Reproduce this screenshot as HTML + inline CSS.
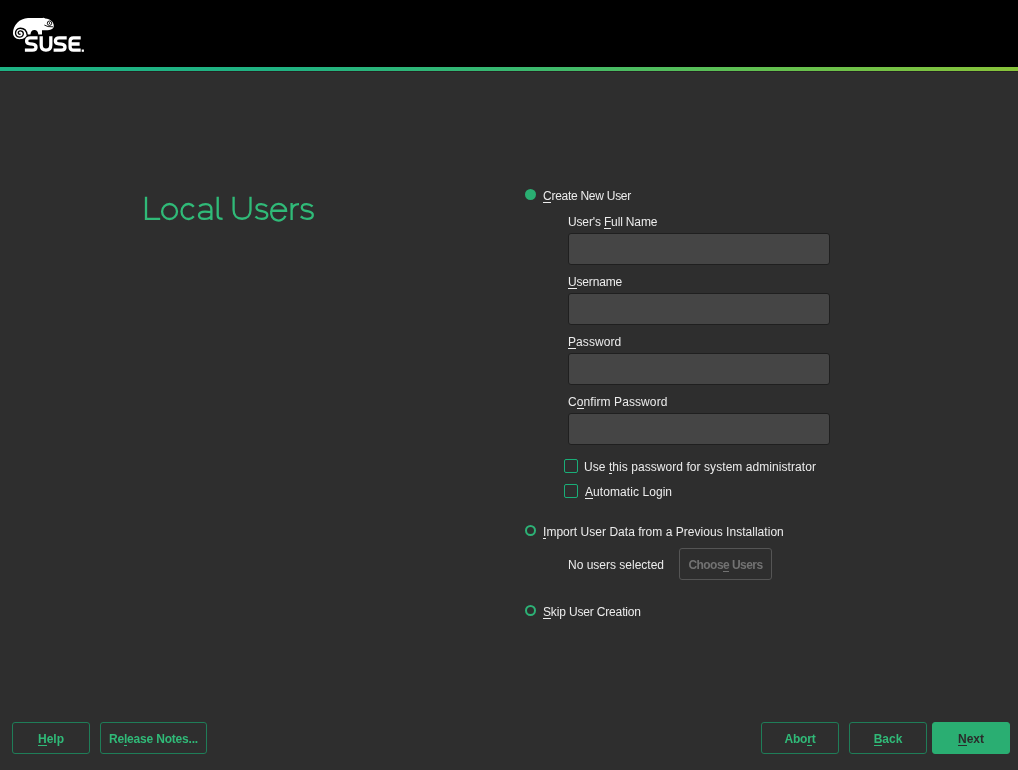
<!DOCTYPE html>
<html><head><meta charset="utf-8">
<style>
html,body{margin:0;padding:0;}
body{width:1018px;height:770px;background:#2e2e2e;position:relative;overflow:hidden;font-family:"Liberation Sans",sans-serif;}
.hdr{position:absolute;left:0;top:0;width:1018px;height:67px;background:#000;}
.line{position:absolute;left:0;top:67px;width:1018px;height:4px;background:linear-gradient(90deg,#1eb284 0%,#20b282 28%,#38b870 50%,#62c050 75%,#88c33a 100%);}
.line2{position:absolute;left:0;top:71px;width:1018px;height:1px;background:#262323;}
.t{position:absolute;will-change:transform;white-space:nowrap;color:#ececec;font-size:12px;line-height:14px;}
.k{position:relative;}
.k::after{content:"";position:absolute;left:0;right:0;top:13px;height:1px;background:currentColor;}
.btn .k::after{top:13px;}
.inp{position:absolute;left:568px;width:260px;height:30px;background:#454545;border:1px solid #1f1f1f;border-radius:3px;}
.radio{position:absolute;left:525px;width:11px;height:11px;border-radius:50%;box-sizing:border-box;}
.chk{position:absolute;left:564px;width:14px;height:14px;box-sizing:border-box;border:1.5px solid #1aae78;border-radius:2px;}
.btn{position:absolute;will-change:transform;height:32px;box-sizing:border-box;border:1px solid #1f7d58;border-radius:3px;color:#30ba78;font-weight:bold;font-size:12px;text-align:center;line-height:30px;padding-top:1px;white-space:nowrap;}
</style></head><body>
<div class="hdr"></div>
<div class="line"></div>
<div class="line2"></div>
<svg style="position:absolute;left:0;top:0" width="100" height="60" viewBox="0 0 100 60">
<path fill="#fff" d="M13,33 C13,25 19.5,18.3 28,17.9 L42.5,17.9 Q44,17.4 45.2,18.4 C50.5,19 53.6,22 53.7,25 C54,27.3 53.3,28.6 51,29.5 C48,30.4 44.5,30.4 42,30.3 L42,34.5 L38.3,34.5 C38.3,32 36.8,30.1 34.4,30.1 C32,30.1 30.5,32 30.5,34.5 L27,34.5 C26.2,37.6 23.2,39.2 19.6,39.2 C15.4,39.2 12.9,36.2 13,33 Z"/>
<path fill="none" stroke="#000" stroke-width="1.35" d="M27.2,35 C26.6,30.2 23.4,28.2 20.4,28.2 C17,28.2 15.4,30.9 15.5,33.3 C15.6,35.8 17.7,37.2 19.9,37.1 C22.3,37 23.5,35.2 23.3,33.4 C23.1,31.6 21.5,30.7 20,30.9 C18.6,31.1 17.9,32.4 18.4,33.5 C18.8,34.3 19.8,34.4 20.5,33.9"/>
<circle cx="49.5" cy="23.2" r="2.2" fill="none" stroke="#000" stroke-width="0.9"/>
<path fill="none" stroke="#000" stroke-width="0.9" d="M49.3,22.2 L49.7,24.1 M44.4,25.1 Q47.5,27.2 53,26.8"/>
<g fill="none" stroke="#fff" stroke-width="3.3">
<path d="M37.6,37.85 L30.5,37.85 Q26.6,37.85 26.6,40.9 Q26.6,43.5 30,43.85 L32.5,44.15 Q36,44.5 36,47.2 Q36,50.15 32.2,50.15 L24.9,50.15"/>
<path d="M41.2,36.2 L41.2,45 Q41.2,50.15 46,50.15 Q50.8,50.15 50.8,45 L50.8,36.2"/>
<path d="M66.7,37.85 L59.4,37.85 Q55.4,37.85 55.4,40.9 Q55.4,43.5 58.8,43.85 L61.4,44.15 Q65,44.5 65,47.2 Q65,50.15 61.2,50.15 L53.6,50.15"/>
<path d="M80.7,37.85 L73.4,37.85 Q70.1,37.85 70.1,41 L70.1,47 Q70.1,50.15 73.4,50.15 L80.7,50.15 M70.1,44 L79.6,44"/>
</g>
<rect x="81.7" y="49.5" width="2.2" height="2.3" fill="#fff"/>
</svg>

<div class="radio" style="top:189px;background:#2aae72;"></div>
<div class="inp" style="top:233px;"></div>
<div class="inp" style="top:293px;"></div>
<div class="inp" style="top:353px;"></div>
<div class="inp" style="top:413px;"></div>
<div class="chk" style="top:459px;"></div>
<div class="chk" style="top:484px;"></div>
<div class="radio" style="top:525px;border:2px solid #2db276;"></div>
<div class="radio" style="top:605px;border:2px solid #2db276;"></div>
<div class="t" style="left:543px;top:189px;letter-spacing:-0.27px;"><span class="k">C</span>reate New User</div>
<div class="t" style="left:568px;top:215px;letter-spacing:-0.15px;">User's <span class="k">F</span>ull Name</div>
<div class="t" style="left:568px;top:275px;letter-spacing:-0.17px;"><span class="k">U</span>sername</div>
<div class="t" style="left:568px;top:335px;letter-spacing:0.07px;"><span class="k">P</span>assword</div>
<div class="t" style="left:568px;top:395px;letter-spacing:0.09px;">C<span class="k">o</span>nfirm Password</div>
<div class="t" style="left:584px;top:460px;letter-spacing:0.06px;">Use <span class="k">t</span>his password for system administrator</div>
<div class="t" style="left:585px;top:485px;letter-spacing:0.07px;"><span class="k">A</span>utomatic Login</div>
<div class="t" style="left:543px;top:525px;letter-spacing:0.03px;"><span class="k">I</span>mport User Data from a Previous Installation</div>
<div class="t" style="left:568px;top:558px;letter-spacing:0px;">No users selected</div>
<div class="t" style="left:543px;top:605px;letter-spacing:-0.16px;"><span class="k">S</span>kip User Creation</div>
<div class="btn" style="left:679px;top:548px;width:93px;border-color:#555;color:#727272;"><span style="letter-spacing:-0.55px">Choos<span class="k">e</span> Users</span></div>
<div class="btn" style="left:12px;top:722px;width:78px;"><span style="letter-spacing:0px"><span class="k">H</span>elp</span></div>
<div class="btn" style="left:100px;top:722px;width:107px;"><span style="letter-spacing:-0.19px">Re<span class="k">l</span>ease Notes...</span></div>
<div class="btn" style="left:761px;top:722px;width:78px;"><span style="letter-spacing:-0.2px">Abo<span class="k">r</span>t</span></div>
<div class="btn" style="left:849px;top:722px;width:78px;"><span style="letter-spacing:0px"><span class="k">B</span>ack</span></div>
<div class="btn" style="left:932px;top:722px;width:78px;background:#2aae72;border-color:#2aae72;color:#2b2b2b;"><span style="letter-spacing:0px"><span class="k">N</span>ext</span></div>
<svg style="position:absolute;left:0;top:0" width="340" height="240" viewBox="0 0 340 240">
<g fill="none" stroke="#30ba78" stroke-width="2.3">
<path d="M146,196.75 L146,218.85 L160.2,218.85"/>
<ellipse cx="169.55" cy="211.5" rx="7.45" ry="7.5"/>
<path d="M193.8,206.8 A6.9 7.5 0 1 0 193.8,216.2"/>
<path d="M199.1,206.2 Q202.5,204.2 205.8,204.2 Q211.4,204.2 211.4,209.8 L211.4,219.9 M211.4,212.2 Q208.5,211.6 205,211.6 Q199,211.6 199,215.3 Q199,218.95 204.3,218.95 Q209.8,218.95 211.4,216"/>
<path d="M217.7,196.7 L217.7,215.5 Q217.7,218.9 222.6,218.9"/>
<path d="M233.6,196.8 L233.6,210 C233.6,215.5 237,218.75 242.05,218.75 C247.1,218.75 250.5,215.5 250.5,210 L250.5,196.8"/>
<path d="M267,206.4 Q264.5,204.05 261.2,204.05 Q256.5,204.05 256.5,207.6 Q256.5,210.2 261,211 L263,211.4 Q267.3,212.3 267.3,215 Q267.3,218.95 261.5,218.95 Q257.8,218.95 255.5,216.4"/>
<path d="M271.3,210.75 L286.1,210.75 A7.4 7.1 0 0 0 271.3,211.4 A7.4 7.55 0 0 0 285.4,215.8"/>
<path d="M291.6,202.9 L291.6,219.9 M291.6,210 Q292.5,204.15 299,204.15"/>
<path d="M312.6,206.4 Q310,204.05 306.6,204.05 Q301.8,204.05 301.8,207.6 Q301.8,210.2 306.3,211 L308.5,211.4 Q312.8,212.3 312.8,215 Q312.8,218.95 307,218.95 Q303.2,218.95 300.8,216.4"/>
</g></svg>
</body></html>
